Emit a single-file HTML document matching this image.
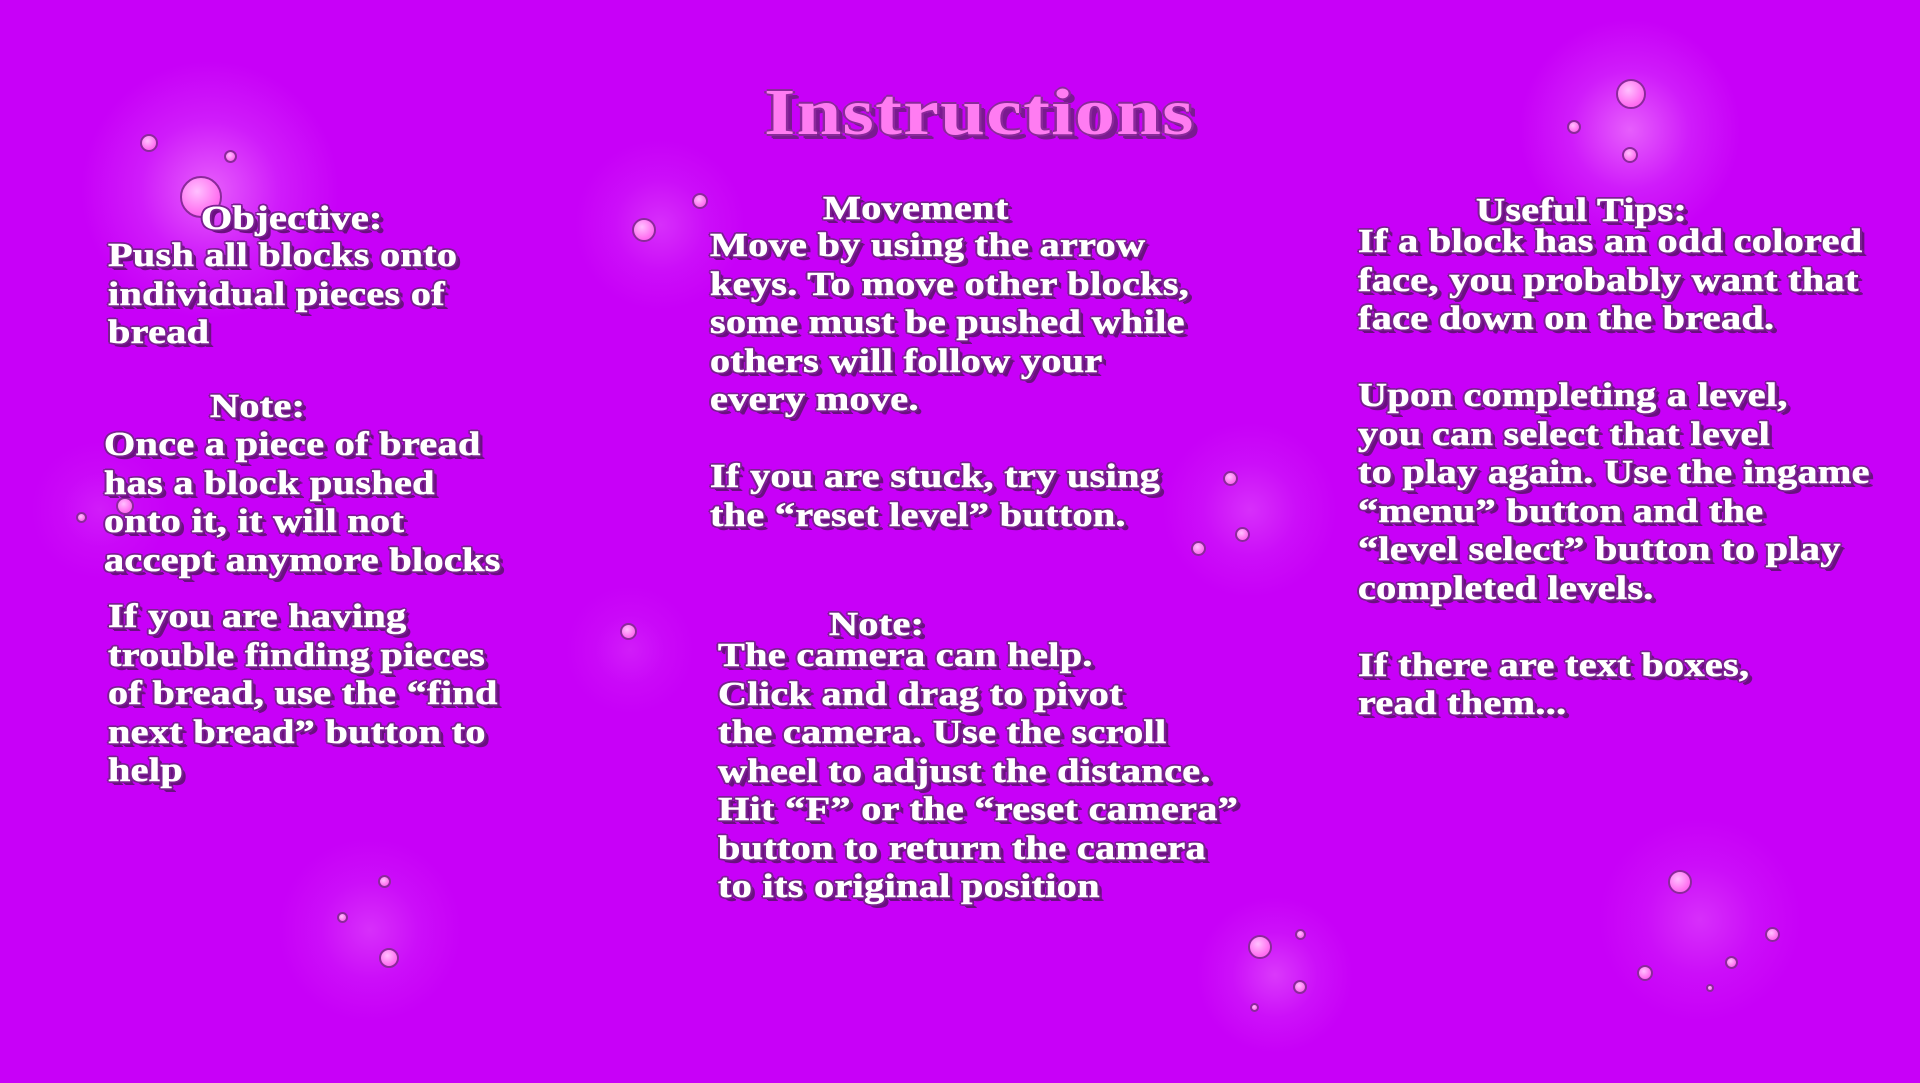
<!DOCTYPE html>
<html><head><meta charset="utf-8"><style>
html,body{margin:0;padding:0}
body{width:1920px;height:1080px;overflow:hidden;background:#c800f8;position:relative;font-family:"Liberation Serif",serif;}
.g{position:absolute;border-radius:50%;background:radial-gradient(circle,rgba(255,170,255,.55) 0%,rgba(230,110,255,.25) 35%,rgba(200,0,248,0) 65%);}
.b{position:absolute;border-radius:50%;background:radial-gradient(circle at 40% 35%,#ffc0ff,#ff6cf0 70%);border:2px solid #8a2a9a;box-sizing:border-box;}
.w{position:absolute;left:0;top:3px;width:100%;height:100%}
.t{position:absolute;color:#fff;font-weight:bold;font-size:34px;line-height:38.5px;white-space:pre;transform:scaleX(1.18);transform-origin:left top;letter-spacing:0.3px;-webkit-text-stroke:0.6px #fff;
text-shadow:-2px 0 #7a2090,2px 0 #7a2090,0 -2px #7a2090,0 2px #7a2090,-1.5px -1.5px #7a2090,1.5px 1.5px #7a2090,-1.5px 1.5px #7a2090,1.5px -1.5px #7a2090,3px 3px 0 #6a1080,4px 4px 0 #6a1080;}
h1{position:absolute;margin:0;left:764px;top:75px;font-size:66px;font-weight:bold;color:#ff7cf2;letter-spacing:1px;white-space:nowrap;transform:scaleX(1.22);transform-origin:left top;
text-shadow:-2px 0 #8a2a9a,2px 0 #8a2a9a,0 -2px #8a2a9a,0 2px #8a2a9a,4px 4px 0 #7a1a90,5px 5px 0 #7a1a90;}
</style></head><body>
<div class="g" style="left:60px;top:60px;width:300px;height:260px"></div>
<div class="g" style="left:1500px;top:20px;width:260px;height:220px"></div>
<div class="g" style="left:560px;top:140px;width:200px;height:170px;opacity:.5"></div>
<div class="g" style="left:1150px;top:420px;width:200px;height:180px;opacity:.5"></div>
<div class="g" style="left:270px;top:830px;width:200px;height:200px;opacity:.5"></div>
<div class="g" style="left:1190px;top:890px;width:170px;height:170px;opacity:.6"></div>
<div class="g" style="left:1580px;top:820px;width:240px;height:200px;opacity:.5"></div>
<div class="g" style="left:20px;top:440px;width:160px;height:140px;opacity:.3"></div>
<div class="g" style="left:560px;top:580px;width:140px;height:140px;opacity:.3"></div>

<div class="b" style="left:140px;top:134px;width:18px;height:18px"></div>
<div class="b" style="left:224px;top:150px;width:13px;height:13px"></div>
<div class="b" style="left:180px;top:176px;width:42px;height:42px"></div>
<div class="b" style="left:632px;top:218px;width:24px;height:24px"></div>
<div class="b" style="left:692px;top:193px;width:16px;height:16px"></div>
<div class="b" style="left:1616px;top:79px;width:30px;height:30px"></div>
<div class="b" style="left:1567px;top:120px;width:14px;height:14px"></div>
<div class="b" style="left:1622px;top:147px;width:16px;height:16px"></div>
<div class="b" style="left:116px;top:497px;width:18px;height:18px"></div>
<div class="b" style="left:76px;top:512px;width:11px;height:11px"></div>
<div class="b" style="left:1223px;top:471px;width:15px;height:15px"></div>
<div class="b" style="left:1191px;top:541px;width:15px;height:15px"></div>
<div class="b" style="left:1235px;top:527px;width:15px;height:15px"></div>
<div class="b" style="left:620px;top:623px;width:17px;height:17px"></div>
<div class="b" style="left:378px;top:875px;width:13px;height:13px"></div>
<div class="b" style="left:337px;top:912px;width:11px;height:11px"></div>
<div class="b" style="left:379px;top:948px;width:20px;height:20px"></div>
<div class="b" style="left:1248px;top:935px;width:24px;height:24px"></div>
<div class="b" style="left:1295px;top:929px;width:11px;height:11px"></div>
<div class="b" style="left:1293px;top:980px;width:14px;height:14px"></div>
<div class="b" style="left:1250px;top:1003px;width:9px;height:9px"></div>
<div class="b" style="left:1668px;top:870px;width:24px;height:24px"></div>
<div class="b" style="left:1765px;top:927px;width:15px;height:15px"></div>
<div class="b" style="left:1637px;top:965px;width:16px;height:16px"></div>
<div class="b" style="left:1725px;top:956px;width:13px;height:13px"></div>
<div class="b" style="left:1706px;top:984px;width:8px;height:8px"></div>

<h1>Instructions</h1>

<div class="w">
<div class="t" style="left:201px;top:197px">Objective:</div>
<div class="t" style="left:108px;top:234px">Push all blocks onto
individual pieces of
bread</div>
<div class="t" style="left:210px;top:385px">Note:</div>
<div class="t" style="left:104px;top:423px">Once a piece of bread
has a block pushed
onto it, it will not
accept anymore blocks</div>
<div class="t" style="left:108px;top:595px">If you are having
trouble finding pieces
of bread, use the “find
next bread” button to
help</div>

<div class="t" style="left:823px;top:187px">Movement</div>
<div class="t" style="left:710px;top:224px">Move by using the arrow
keys. To move other blocks,
some must be pushed while
others will follow your
every move.

If you are stuck, try using
the “reset level” button.</div>
<div class="t" style="left:829px;top:603px">Note:</div>
<div class="t" style="left:718px;top:634px">The camera can help.
Click and drag to pivot
the camera. Use the scroll
wheel to adjust the distance.
Hit “F” or the “reset camera”
button to return the camera
to its original position</div>

<div class="t" style="left:1476px;top:189px">Useful Tips:</div>
<div class="t" style="left:1358px;top:220px">If a block has an odd colored
face, you probably want that
face down on the bread.

Upon completing a level,
you can select that level
to play again. Use the ingame
“menu” button and the
“level select” button to play
completed levels.

If there are text boxes,
read them...</div>
</div>
</body></html>
